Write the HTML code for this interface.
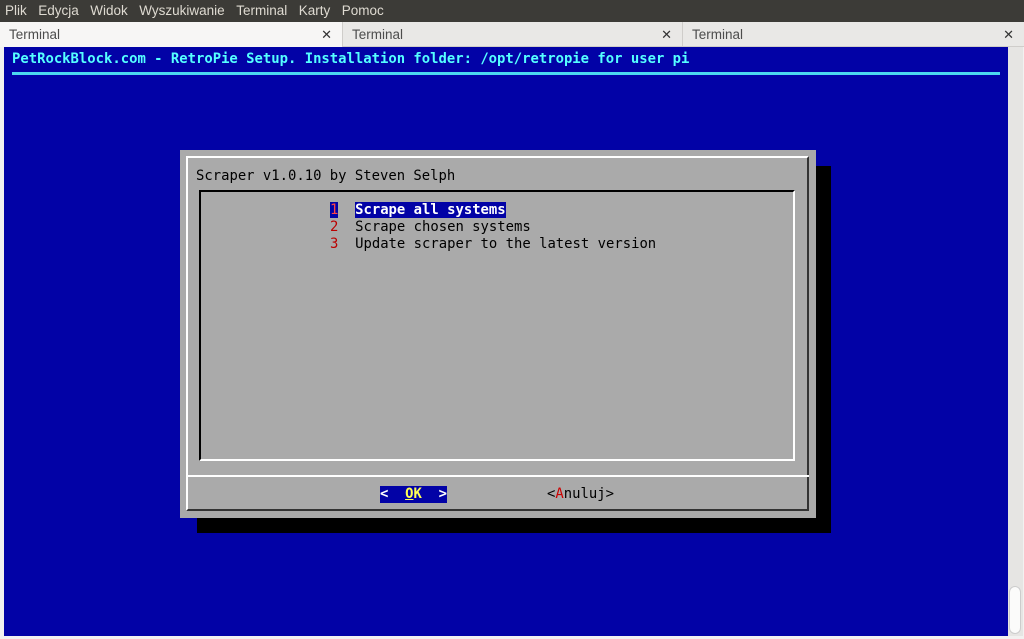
<!DOCTYPE html><html><head><style>
*{margin:0;padding:0;box-sizing:border-box}
body{width:1024px;height:639px;overflow:hidden;background:#f2f1f0;position:relative;font-family:"Liberation Sans",sans-serif}
.menu{position:absolute;left:0;top:0;width:1024px;height:22px;background:#3c3b37;color:#dfdbd2;font-size:13.5px;line-height:22px;padding-left:5px;word-spacing:2px}
.tabs{position:absolute;top:22px;left:0;width:1024px;height:25px;background:#e9e8e6;border-bottom:1px solid #cfcdca}
.tab{position:absolute;top:0;height:25px;font-size:13.5px;line-height:25px;color:#4c4c4c;padding-left:9px;border-right:1px solid #cfcdca}
.tab .x{position:absolute;right:10px;top:0;font-size:13px;color:#333}
.term{position:absolute;left:4px;top:47px;width:1004px;height:589px;background:#0202a6}
.sb{position:absolute;left:1008px;top:47px;width:15px;height:589px;background:#e6e5e3}
.sb div{position:absolute;left:1px;bottom:2px;width:12px;height:48px;background:#fbfbfa;border:1px solid #ccc;border-radius:6px}
.mono{font-family:"DejaVu Sans Mono","Liberation Mono",monospace;font-size:13.9px;white-space:pre;position:absolute;line-height:17px}
.a{position:absolute}
</style></head><body>
<div class="menu">Plik &nbsp;Edycja &nbsp;Widok &nbsp;Wyszukiwanie &nbsp;Terminal &nbsp;Karty &nbsp;Pomoc</div>
<div class="tabs">
<div class="tab" style="left:0;width:343px;background:#f7f6f5">Terminal<span class="x">✕</span></div>
<div class="tab" style="left:343px;width:340px">Terminal<span class="x">✕</span></div>
<div class="tab" style="left:683px;width:341px;border:none">Terminal<span class="x">✕</span></div>
</div>
<div class="term"></div>
<div class="sb"><div></div></div>
<div class="mono" style="left:12px;top:51px;color:#5ff;font-weight:bold">PetRockBlock.com - RetroPie Setup. Installation folder: /opt/retropie for user pi</div>
<div class="a" style="left:12px;top:72px;width:988px;height:3px;background:#4cd8f0"></div>
<div class="a" style="left:197px;top:166px;width:634px;height:367px;background:#000"></div>
<div class="a" style="left:180px;top:150px;width:636px;height:368px;background:#aaa"></div>
<div class="a" style="left:186px;top:156px;width:623px;height:355px;border-top:2px solid #fff;border-left:2px solid #fff;border-right:2px solid #333;border-bottom:2px solid #333"></div>
<div class="mono" style="left:196px;top:168px;color:#000">Scraper v1.0.10 by Steven Selph</div>
<div class="a" style="left:199px;top:190px;width:596px;height:271px;border-top:2px solid #000;border-left:2px solid #000;border-right:2px solid #fff;border-bottom:2px solid #fff"></div>
<div class="mono" style="left:330px;top:202px;color:#000"><span style="background:#0202a6;color:#f44">1</span>  <span style="background:#0202a6;color:#fff;font-weight:bold">Scrape all systems</span>
<span style="color:#b00">2</span>  Scrape chosen systems
<span style="color:#b00">3</span>  Update scraper to the latest version</div>
<div class="a" style="left:186px;top:475px;width:623px;height:2px;background:#fff"></div>
<div class="mono" style="left:380px;top:486px;background:#0202a6;color:#fff;font-weight:bold">&lt;  <span style="color:#ff5;text-decoration:underline">O</span><span style="color:#ff5">K</span>  &gt;</div>
<div class="mono" style="left:547px;top:486px;color:#000">&lt;<span style="color:#c00">A</span>nuluj&gt;</div>
</body></html>
